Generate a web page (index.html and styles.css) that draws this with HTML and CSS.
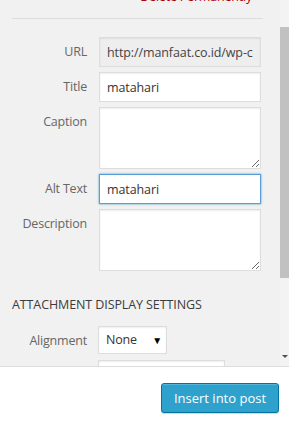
FILE: index.html
```html
<!DOCTYPE html>
<html>
<head>
<meta charset="utf-8">
<link rel="stylesheet" href="styles.css">
</head>
<body>
<div class="main">
  <div class="content">
    <div class="delete"><a>Delete Permanently</a></div>
    <div class="sep"></div>
    <div class="row">
      <label class="lbl">URL</label>
      <input class="field readonly" type="text" value="http://manfaat.co.id/wp-content/uploads/matahari.jpg" readonly>
    </div>
    <div class="row">
      <label class="lbl">Title</label>
      <input class="field" type="text" value="matahari">
    </div>
    <div class="row">
      <label class="lbl">Caption</label>
      <textarea class="field area"></textarea>
    </div>
    <div class="row">
      <label class="lbl">Alt Text</label>
      <input class="field focus" type="text" value="matahari">
    </div>
    <div class="row">
      <label class="lbl">Description</label>
      <textarea class="field area"></textarea>
    </div>
    <h2 class="heading">Attachment Display Settings</h2>
    <div class="row">
      <label class="lbl">Alignment</label>
      <div class="select small"><span>None</span><span class="arrow">▼</span></div>
    </div>
    <div class="row">
      <label class="lbl"></label>
      <div class="select wide"></div>
    </div>
  </div>
  <div class="scrollbar">
    <div class="thumb"></div>
    <div class="down"></div>
  </div>
</div>
<div class="footer">
  <button class="btn">Insert into post</button>
</div>
</body>
</html>
```
FILE: styles.css
```css
* { box-sizing: border-box; }
html, body { margin: 0; padding: 0; }
body {
  width: 289px;
  height: 422px;
  overflow: hidden;
  background: #f1f1f1;
  font-family: "Open Sans", "Liberation Sans", sans-serif;
  font-size: 12.5px;
  letter-spacing: -0.2px;
  line-height: 18px;
  color: #444;
  display: flex;
  flex-direction: column;
}
.main {
  height: 366px;
  display: flex;
  overflow: hidden;
}
.content {
  flex: 1;
  padding: 0 18px 0 12px;
  overflow: hidden;
}
.delete {
  margin-top: -12px;
  text-align: right;
  padding-right: 10px;
  color: #a00;
  height: 18px;
}
.sep {
  height: 1px;
  background: #dddddd;
  margin: 12px -1px 18px 0;
}
.row {
  display: flex;
  align-items: flex-start;
  margin-bottom: 5px;
}
.lbl {
  width: 75px;
  flex: none;
  text-align: right;
  color: #666;
  padding-top: 6px;
  margin-right: 12px;
}
.field {
  width: 162px;
  height: 30px;
  border: 1px solid #ddd;
  background: #fff;
  box-shadow: inset 0 1px 2px rgba(0,0,0,0.07);
  font-family: "Open Sans", "Liberation Sans", sans-serif;
  font-size: 12.5px;
  letter-spacing: -0.1px;
  color: #333;
  padding: 0 7px;
  margin: 0;
  outline: none;
  border-radius: 0;
}
.readonly {
  background: #eee;
  color: #444;
}
.area {
  height: 62px;
  resize: vertical;
  display: block;
}
.focus {
  border-color: #5b9dd9;
  box-shadow: 0 0 2px rgba(30,140,190,0.8);
}
.heading {
  margin: 25px 0 12px;
  font-size: 12.5px;
  font-weight: 400;
  letter-spacing: -0.1px;
  line-height: 18px;
  text-transform: uppercase;
  color: #3c3c3c;
}
.select {
  height: 28px;
  border: 1px solid #ddd;
  background: #fff;
  box-shadow: inset 0 1px 2px rgba(0,0,0,0.07);
  display: flex;
  align-items: center;
  justify-content: space-between;
  padding: 0 4px 0 7px;
  color: #333;
  margin-left: -1px;
}
.small { width: 69px; }
.wide { width: 127px; margin-top: 1px; }
.arrow { font-size: 10px; color: #000; }
.scrollbar {
  width: 9px;
  flex: none;
  display: flex;
  flex-direction: column;
  background: #f3f3f3;
}
.thumb {
  margin-top: 27px;
  height: 251px;
  background: #c1c1c1;
}
.down {
  margin-top: auto;
  margin-bottom: 8px;
  margin-left: 2px;
  width: 0;
  height: 0;
  border-left: 3px solid transparent;
  border-right: 3px solid transparent;
  border-top: 3px solid #505050;
}
.footer {
  flex: 1;
  background: #fff;
  border-top: 1px solid #ddd;
  display: flex;
  justify-content: flex-end;
  align-items: flex-start;
  padding: 16px 10px 0 0;
}
.btn {
  height: 30px;
  width: 118px;
  background: #2ea2cc;
  border: 1px solid #0074a2;
  border-radius: 3px;
  box-shadow: inset 0 1px 0 rgba(120,200,230,0.5), 0 1px 0 rgba(0,0,0,0.15);
  color: #fff;
  font-family: "Open Sans", "Liberation Sans", sans-serif;
  font-size: 13px;
  padding: 0 10px;
}
```
